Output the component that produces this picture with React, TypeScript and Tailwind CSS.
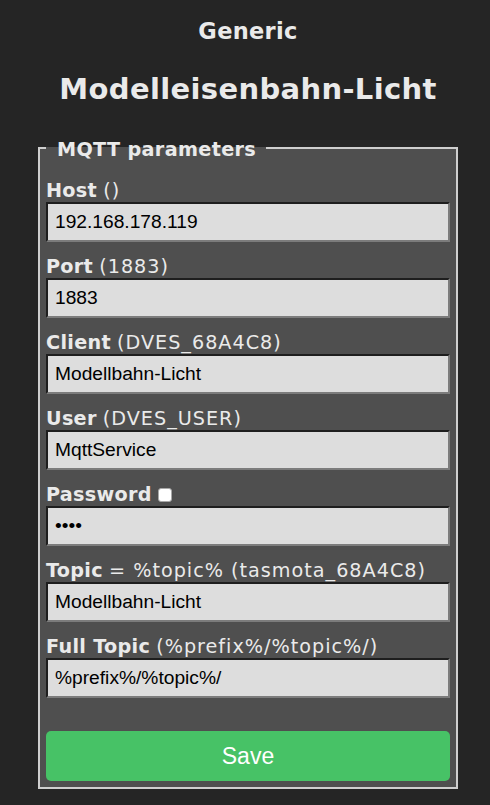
export default function App() {
  const fields = [
    { label: "Host", hint: "()", value: "192.168.178.119" },
    { label: "Port", hint: "(1883)", value: "1883" },
    { label: "Client", hint: "(DVES_68A4C8)", value: "Modellbahn-Licht" },
    { label: "User", hint: "(DVES_USER)", value: "MqttService" },
    { label: "Password", hint: "", value: "1234", password: true },
    { label: "Topic", hint: "= %topic% (tasmota_68A4C8)", value: "Modellbahn-Licht" },
    { label: "Full Topic", hint: "(%prefix%/%topic%/)", value: "%prefix%/%topic%/" },
  ]

  return (
    <div className="min-h-screen w-full bg-[#252525] text-[#eaeaea] font-['DejaVu_Sans',Verdana,sans-serif] text-[19.2px] pb-[15px]">
      <div className="w-[420px] ml-[38px] pt-[18px]">
        {/* Kopfzeile */}
        <div className="text-center">
          <h3 className="text-[22.5px] font-bold leading-[26px] tracking-[0.3px]">Generic</h3>
          <h2 className="mt-[28px] text-[29px] font-bold leading-[34px] tracking-[0.35px]">Modelleisenbahn-Licht</h2>
        </div>

        <fieldset className="mt-[31px] bg-[#4f4f4f] border-2 border-[#cfcfcf] px-[6px] pt-[21px] pb-[6px]">
          <legend className="pl-[11px] pr-[10px] font-bold leading-[22.4px] tracking-[0.35px]">
            <span className="relative top-[2px]">MQTT parameters</span>
          </legend>

          <div className="flex flex-col gap-[14px]">
            {fields.map((f) => (
              <div key={f.label} className="flex flex-col">
                <div className="leading-[22px] whitespace-nowrap">
                  <b className="tracking-[0.3px]">{f.label}</b>{" "}
                  <span className="tracking-[1px]">{f.hint}</span>
                  {f.password && (
                    <span className="inline-block align-[-1px] w-[14px] h-[14px] bg-white border border-[#a8a8a8] rounded-[3px]" />
                  )}
                </div>
                <input
                  type={f.password ? "password" : "text"}
                  defaultValue={f.value}
                  className="w-full h-[40px] bg-[#dddddd] text-black px-[7px] text-[19.2px] font-['Liberation_Sans',Arial,sans-serif] border-2 border-t-[#1e1e1e] border-l-[#1e1e1e] border-r-[#7c7c7c] border-b-[#7c7c7c] outline-none"
                />
              </div>
            ))}
          </div>

          <button className="mt-[33px] w-full h-[50px] rounded-[5px] bg-[#47c266] text-white text-[23px] font-['Liberation_Sans',Arial,sans-serif]">
            Save
          </button>
        </fieldset>
      </div>
    </div>
  )
}
